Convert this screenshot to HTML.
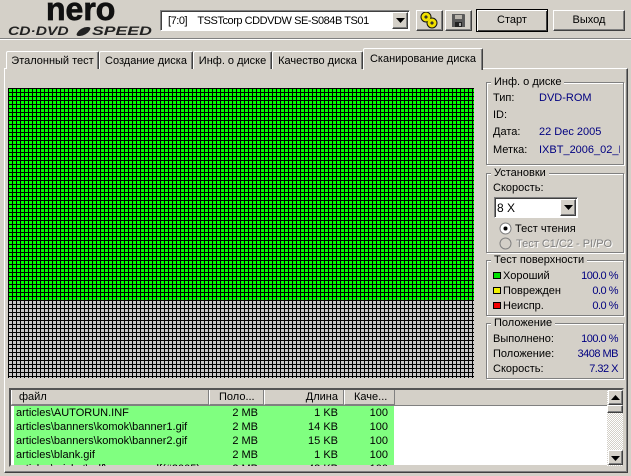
<!DOCTYPE html>
<html><head><meta charset="utf-8"><style>
html,body{margin:0;padding:0}
body{width:631px;height:476px;overflow:hidden;position:relative;background:#d4d0c8;font:11px/13px "Liberation Sans",sans-serif;color:#000}
.a,.t,.b,.g{position:absolute}
.t{white-space:nowrap}
.v{color:#000080}
.w{letter-spacing:-.5px;right:13px}
.b{box-sizing:border-box;background:#d4d0c8;border:1px solid;border-color:#fff #404040 #404040 #fff;box-shadow:inset -1px -1px 0 #808080;text-align:center;line-height:19px}
.g{box-sizing:border-box;border:1px solid #808080;box-shadow:1px 1px 0 #fff,inset 1px 1px 0 #fff}
.gl{position:absolute;background:#d4d0c8;padding:0 3px;left:4px;top:-7px;white-space:nowrap;line-height:12px}
.tab{position:absolute;box-sizing:border-box;top:50px;height:19px;border:1px solid;border-color:#fff #404040 transparent #fff;border-bottom:0;border-radius:2px 2px 0 0;text-align:center;line-height:18px;white-space:nowrap;box-shadow:inset -1px 0 0 #808080;background:#d4d0c8}
.h{position:absolute;top:390px;height:15px;box-sizing:border-box;background:#d4d0c8;border-right:1px solid #808080;border-left:1px solid #fff;border-bottom:1px solid #808080;line-height:15px;white-space:nowrap;padding:0 3px}
.r{position:absolute;left:0;width:383px;height:14px;line-height:14px;color:#000}
.r span{position:absolute;white-space:nowrap}
.c1{left:5px}.c2{right:136px}.c3{right:56px}.c4{right:6px}
</style></head><body>

<div class="t" style="left:46px;top:-7px;font:bold 32px/32px 'Liberation Sans',sans-serif;color:#111;-webkit-text-stroke:.7px #111">nero</div>
<div class="t" style="left:8px;top:25px;font:italic bold 12px/13px 'Liberation Sans',sans-serif;color:#222;transform:scaleX(1.3);transform-origin:left top">CD·DVD</div>
<div class="a" style="left:78px;top:27px;width:11px;height:9px;background:#222;border-radius:60% 30% 60% 30%;transform:skewX(-30deg)"></div>
<div class="t" style="left:92px;top:25px;font:italic bold 12px/13px 'Liberation Sans',sans-serif;color:#222;transform:scaleX(1.47);transform-origin:left top">SPEED</div>

<div class="a" style="left:0;top:38px;width:631px;height:1px;background:#808080"></div>
<div class="a" style="left:0;top:39px;width:631px;height:1px;background:#fff"></div>

<div class="a" style="left:160px;top:10px;width:250px;height:21px;box-sizing:border-box;background:#fff;border:1px solid;border-color:#808080 #fff #fff #808080;box-shadow:inset 1px 1px 0 #404040"></div>
<div class="t" style="left:168px;top:15px;letter-spacing:-.45px">[7:0]&nbsp;&nbsp;&nbsp; TSSTcorp CDDVDW SE-S084B TS01</div>
<div class="b" style="left:392px;top:12px;width:16px;height:17px"></div>
<svg class="a" style="left:396px;top:18px" width="9" height="5"><path d="M0 0h9L4.500 5z" fill="#000"/></svg>

<div class="b" style="left:416px;top:10px;width:27px;height:21px"></div>
<svg class="a" style="left:420px;top:12px" width="19" height="17" fill="none"><g stroke="#111" stroke-width="5"><circle cx="6" cy="5" r="3"/><circle cx="12" cy="11" r="3"/></g><g stroke="#f0e000" stroke-width="3"><circle cx="6" cy="5" r="3"/><circle cx="12" cy="11" r="3"/></g></svg>

<div class="b" style="left:445px;top:10px;width:27px;height:21px"></div>
<svg class="a" style="left:452px;top:14px" width="13" height="13" shape-rendering="crispEdges"><path d="M0 0h12l1 1v12H0z" fill="#5a5a5a"/><rect x="3" y="1" width="7" height="4" fill="#b8b4ac"/><rect x="3" y="8" width="7" height="5" fill="#222"/><rect x="7" y="9" width="2" height="3" fill="#aaa"/></svg>

<div class="b" style="left:476px;top:9px;width:72px;height:23px;border:1px solid #000;box-shadow:inset 1px 1px 0 #fff,inset -1px -1px 0 #404040;line-height:21px">Старт</div>
<div class="b" style="left:553px;top:10px;width:72px;height:21px">Выход</div>

<!-- tab panel -->
<div class="a" style="left:4px;top:68px;width:624px;height:405px;box-sizing:border-box;border:1px solid;border-color:#fff #404040 #404040 #fff;box-shadow:inset -1px -1px 0 #808080"></div>
<div class="tab" style="left:6px;top:51px;width:93px;height:18px">Эталонный тест</div>
<div class="tab" style="left:99px;top:51px;width:94px;height:18px">Создание диска</div>
<div class="tab" style="left:193px;top:51px;width:79px;height:18px">Инф. о диске</div>
<div class="tab" style="left:272px;top:51px;width:91px;height:18px">Качество диска</div>
<div class="tab" style="left:363px;top:48px;width:120px;height:22px;line-height:20px;z-index:2">Сканирование диска</div>

<!-- grid -->
<svg class="a" style="left:8px;top:88px" width="466" height="290" shape-rendering="crispEdges">
<defs>
<pattern id="pg" width="4" height="4" patternUnits="userSpaceOnUse"><rect width="4" height="4" fill="#000"/><rect x="1" y="1" width="3" height="3" fill="#00ff00"/></pattern>
<pattern id="pk" width="4" height="4" patternUnits="userSpaceOnUse"><rect width="4" height="4" fill="#000"/><rect x="1" y="1" width="3" height="3" fill="#c8c8c8"/></pattern>
</defs>
<rect width="466" height="213" fill="url(#pg)"/><rect y="212" width="466" height="78" fill="url(#pk)"/>
</svg>

<!-- info group -->
<div class="g" style="left:486px;top:82px;width:138px;height:83px"><div class="gl">Инф. о диске</div></div>
<div class="t" style="left:493px;top:92px">Тип:</div><div class="t v" style="left:539px;top:92px">DVD-ROM</div>
<div class="t" style="left:493px;top:109px">ID:</div>
<div class="t" style="left:493px;top:126px">Дата:</div><div class="t v" style="left:539px;top:126px">22 Dec 2005</div>
<div class="t" style="left:493px;top:144px">Метка:</div><div class="t v" style="left:539px;top:144px;width:81px;overflow:hidden">IXBT_2006_02_DVD</div>

<!-- settings -->
<div class="g" style="left:486px;top:173px;width:138px;height:80px"><div class="gl">Установки</div></div>
<div class="t" style="left:493px;top:182px">Скорость:</div>
<div class="a" style="left:494px;top:197px;width:84px;height:21px;box-sizing:border-box;background:#fff;border:1px solid;border-color:#808080 #fff #fff #808080;box-shadow:inset 1px 1px 0 #404040"></div>
<div class="t" style="left:497px;top:202px;font-size:12px">8 X</div>
<div class="b" style="left:560px;top:199px;width:16px;height:17px"></div>
<svg class="a" style="left:564px;top:205px" width="9" height="5"><path d="M0 0h9L4.500 5z" fill="#000"/></svg>
<svg class="a" style="left:499px;top:222px" width="13" height="13"><circle cx="6.500" cy="6.500" r="5.500" fill="#fff" stroke="#808080"/><circle cx="6.500" cy="6.500" r="2" fill="#000"/></svg>
<div class="t" style="left:515px;top:223px">Тест чтения</div>
<svg class="a" style="left:499px;top:237px" width="13" height="13"><circle cx="6.500" cy="6.500" r="5.500" fill="#d4d0c8" stroke="#808080"/></svg>
<div class="t" style="left:516px;top:238px;color:#808080;text-shadow:1px 1px 0 #fff">Тест C1/C2 - PI/PO</div>

<!-- surface -->
<div class="g" style="left:486px;top:260px;width:138px;height:56px"><div class="gl">Тест поверхности</div></div>
<div class="a" style="left:493px;top:272px;width:6px;height:5px;background:#00e000;border:1px solid #000"></div>
<div class="t" style="left:503px;top:270px">Хороший</div><div class="t v w" style="top:270px">100.0 %</div>
<div class="a" style="left:493px;top:287px;width:6px;height:5px;background:#f0f000;border:1px solid #000"></div>
<div class="t" style="left:503px;top:285px">Поврежден</div><div class="t v w" style="top:285px">0.0 %</div>
<div class="a" style="left:493px;top:302px;width:6px;height:5px;background:#f00000;border:1px solid #000"></div>
<div class="t" style="left:503px;top:300px">Неиспр.</div><div class="t v w" style="top:300px">0.0 %</div>

<!-- position -->
<div class="g" style="left:486px;top:323px;width:138px;height:56px"><div class="gl">Положение</div></div>
<div class="t" style="left:493px;top:333px">Выполнено:</div><div class="t v w" style="top:333px">100.0 %</div>
<div class="t" style="left:493px;top:348px">Положение:</div><div class="t v w" style="top:348px">3408 MB</div>
<div class="t" style="left:493px;top:363px">Скорость:</div><div class="t v w" style="top:363px">7.32 X</div>

<!-- list -->
<div class="a" style="left:9px;top:388px;width:615px;height:79px;box-sizing:border-box;background:#fff;border:2px solid;border-color:#555 #d4d0c8 #d4d0c8 #555;overflow:hidden">
<div class="a" style="left:0;top:0;width:613px;height:15px;background:#d4d0c8;border-bottom:1px solid #808080"></div>
<div class="r" style="top:16px;left:3px;width:380px;height:60px;background:#80ff80"></div>
</div>
<div class="h" style="left:11px;width:198px;padding-left:7px">файл</div>
<div class="h" style="left:209px;width:55px;padding-left:9px">Поло...</div>
<div class="h" style="left:264px;width:80px;text-align:right;padding-right:5px">Длина</div>
<div class="h" style="left:344px;width:51px;padding-left:9px">Каче...</div>

<div class="a" style="left:11px;top:406px;width:384px;height:60px;overflow:hidden">
<div class="r" style="top:0"><span class="c1">articles\AUTORUN.INF</span><span class="c2">2 MB</span><span class="c3">1 KB</span><span class="c4">100</span></div>
<div class="r" style="top:14px"><span class="c1">articles\banners\komok\banner1.gif</span><span class="c2">2 MB</span><span class="c3">14 KB</span><span class="c4">100</span></div>
<div class="r" style="top:28px"><span class="c1">articles\banners\komok\banner2.gif</span><span class="c2">2 MB</span><span class="c3">15 KB</span><span class="c4">100</span></div>
<div class="r" style="top:42px"><span class="c1">articles\blank.gif</span><span class="c2">2 MB</span><span class="c3">1 KB</span><span class="c4">100</span></div>
<div class="r" style="top:56px"><span class="c1">articles\cricket\pdf\camera.pdf(#3005)</span><span class="c2">2 MB</span><span class="c3">48 KB</span><span class="c4">100</span></div>
</div>

<!-- scrollbar -->
<div class="a" style="left:607px;top:390px;width:16px;height:76px;background:repeating-conic-gradient(#fff 0 25%,#d4d0c8 0 50%) 0 0/2px 2px"></div>
<div class="b" style="left:608px;top:390px;width:15px;height:15px"></div>
<svg class="a" style="left:611px;top:395px" width="9" height="5"><path d="M0 5h9L4.500 0z" fill="#000"/></svg>
<div class="b" style="left:607px;top:405px;width:16px;height:8px"></div>
<div class="b" style="left:608px;top:450px;width:15px;height:15px"></div>
<svg class="a" style="left:611px;top:456px" width="9" height="5"><path d="M0 0h9L4.500 5z" fill="#000"/></svg>
</body></html>
